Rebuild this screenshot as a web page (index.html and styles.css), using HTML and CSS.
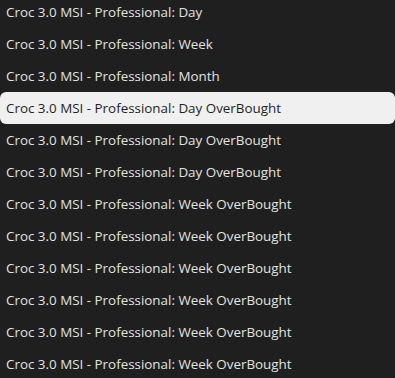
FILE: index.html
```html
<!DOCTYPE html>
<html>
<head>
<meta charset="utf-8">
<link rel="stylesheet" href="styles.css">
</head>
<body>
<ul class="list">
  <li class="item">Croc 3.0 MSI - Professional: Day</li>
  <li class="item">Croc 3.0 MSI - Professional: Week</li>
  <li class="item">Croc 3.0 MSI - Professional: Month</li>
  <li class="item active">Croc 3.0 MSI - Professional: Day OverBought</li>
  <li class="item">Croc 3.0 MSI - Professional: Day OverBought</li>
  <li class="item">Croc 3.0 MSI - Professional: Day OverBought</li>
  <li class="item">Croc 3.0 MSI - Professional: Week OverBought</li>
  <li class="item">Croc 3.0 MSI - Professional: Week OverBought</li>
  <li class="item">Croc 3.0 MSI - Professional: Week OverBought</li>
  <li class="item">Croc 3.0 MSI - Professional: Week OverBought</li>
  <li class="item">Croc 3.0 MSI - Professional: Week OverBought</li>
  <li class="item">Croc 3.0 MSI - Professional: Week OverBought</li>
</ul>
</body>
</html>
```
FILE: styles.css
```css
html, body {
  margin: 0;
  padding: 0;
  background: #1f1f1f;
  overflow: hidden;
}
.list {
  list-style: none;
  margin: -4px 0 0 0;
  padding: 0;
  display: flex;
  flex-direction: column;
}
.item {
  height: 32px;
  line-height: 32px;
  padding-left: 6px;
  font-family: "Open Sans", sans-serif;
  font-size: 13.4px;
  font-weight: 500;
  color: #e2e2e2;
  border-radius: 6px;
  white-space: nowrap;
}
.item.active {
  background: #f0f0f0;
  color: #1f1f1f;
}
```
